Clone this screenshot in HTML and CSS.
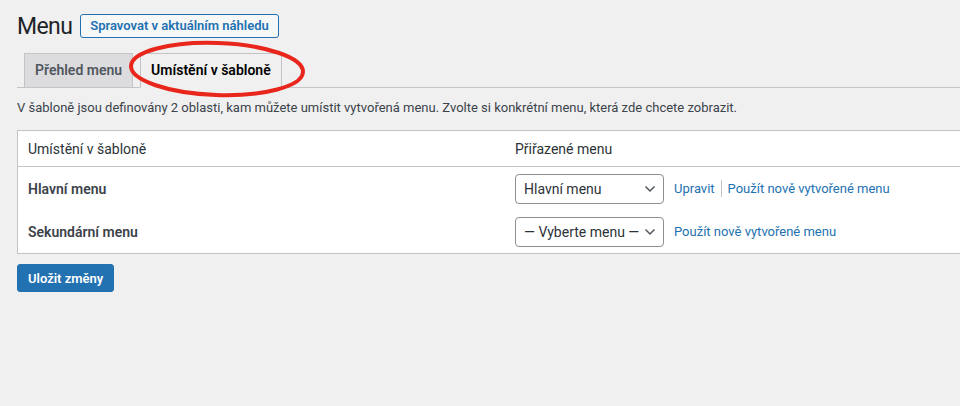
FILE: index.html
```html
<!DOCTYPE html>
<html lang="cs">
<head>
  <meta charset="UTF-8" />
  <meta name="viewport" content="width=device-width, initial-scale=1.0"/>
  <title>Menu</title>
  <link rel="stylesheet" href="styles.css">
</head>
<body>
  <div class="wrap">
    <div class="title-row">
      <h1>Menu</h1>
      <a href="#" class="title-action">Spravovat v aktuálním náhledu</a>
    </div>

    <div class="tabs">
      <a href="#" class="tab">Přehled menu</a>
      <a href="#" class="tab active">Umístění v šabloně</a>
      <svg class="mark" width="186" height="66" viewBox="0 0 186 66">
        <ellipse cx="93" cy="32" rx="86" ry="26" transform="rotate(2 93 32)" fill="none" stroke="#e8261c" stroke-width="4"/>
      </svg>
    </div>

    <p class="intro">V šabloně jsou definovány 2 oblasti, kam můžete umístit vytvořená menu. Zvolte si konkrétní menu, která zde chcete zobrazit.</p>

    <table class="locations">
      <thead>
        <tr>
          <th>Umístění v šabloně</th>
          <th>Přiřazené menu</th>
        </tr>
      </thead>
      <tbody>
        <tr>
          <td class="label">Hlavní menu</td>
          <td>
            <div class="assign">
              <span class="select">
                <select>
                  <option>Hlavní menu</option>
                </select>
                <svg class="chevron" width="12" height="8" viewBox="0 0 12 8"><path d="M1.5 1.5 6 6l4.5-4.5" fill="none" stroke="#50575e" stroke-width="1.5"/></svg>
              </span>
              <a href="#">Upravit</a>
              <span class="sep"></span>
              <a href="#">Použít nově vytvořené menu</a>
            </div>
          </td>
        </tr>
        <tr>
          <td class="label">Sekundární menu</td>
          <td>
            <div class="assign">
              <span class="select">
                <select>
                  <option>— Vyberte menu —</option>
                </select>
                <svg class="chevron" width="12" height="8" viewBox="0 0 12 8"><path d="M1.5 1.5 6 6l4.5-4.5" fill="none" stroke="#50575e" stroke-width="1.5"/></svg>
              </span>
              <a href="#">Použít nově vytvořené menu</a>
            </div>
          </td>
        </tr>
      </tbody>
    </table>

    <button class="primary">Uložit změny</button>
  </div>
</body>
</html>
```

FILE: styles.css
```css
body {
  margin: 0;
  font-family: Roboto, "Noto Sans", sans-serif;
  font-size: 13px;
  color: #3c434a;
  background-color: #f0f0f1;
  overflow: hidden;
}

.wrap {
  padding: 10px 0 0 17px;
}

.title-row {
  display: flex;
  align-items: center;
  height: 32px;
}

.title-row h1 {
  margin: 0 8px 0 0;
  font-size: 23px;
  font-weight: 400;
  letter-spacing: -0.6px;
  color: #1d2327;
}

.title-action {
  display: inline-block;
  padding: 0 9px;
  height: 22px;
  line-height: 22px;
  border: 1px solid #2271b1;
  border-radius: 3px;
  background-color: #f6f7f7;
  color: #2271b1;
  font-weight: 600;
  text-decoration: none;
}

.tabs {
  position: relative;
  display: flex;
  margin-top: 11px;
  border-bottom: 1px solid #c3c4c7;
}

.tab {
  margin: 0 0 -1px 7px;
  padding: 0 10px;
  height: 33px;
  line-height: 33px;
  border: 1px solid #c3c4c7;
  background-color: #dcdcde;
  color: #50575e;
  font-size: 14px;
  font-weight: 600;
  text-decoration: none;
}

.tab.active {
  background-color: #f0f0f1;
  border-bottom-color: #f0f0f1;
  color: #000;
}

.mark {
  position: absolute;
  left: 107px;
  top: -16px;
}

.intro {
  margin: 10px 0 12px;
  line-height: 20px;
}

.locations {
  width: 976px;
  border-collapse: collapse;
  background-color: #fff;
  border: 1px solid #c3c4c7;
}

.locations th {
  width: 50%;
  height: 35px;
  padding: 0 10px;
  text-align: left;
  font-size: 14px;
  font-weight: 400;
  color: #2c3338;
  border-bottom: 1px solid #c3c4c7;
}

.locations td {
  height: 43px;
  padding: 0 10px;
  font-size: 14px;
}

.locations td.label {
  font-weight: 600;
  color: #3c434a;
}

.assign {
  display: flex;
  align-items: center;
}

.select {
  position: relative;
  margin-right: 10px;
}

.select select {
  appearance: none;
  -webkit-appearance: none;
  width: 149px;
  height: 30px;
  padding: 0 24px 0 8px;
  border: 1px solid #8c8f94;
  border-radius: 4px;
  background-color: #fff;
  color: #2c3338;
  font-family: inherit;
  font-size: 14px;
}

.chevron {
  position: absolute;
  right: 8px;
  top: 11px;
  pointer-events: none;
}

.assign a {
  color: #2271b1;
  font-size: 13px;
  text-decoration: none;
}

.sep {
  display: inline-block;
  width: 1px;
  height: 17px;
  margin: 0 6px;
  background-color: #c3c4c7;
}

.primary {
  margin-top: 10px;
  padding: 0 10px;
  height: 28px;
  border: 1px solid #2271b1;
  border-radius: 3px;
  background-color: #2271b1;
  color: #fff;
  font-family: inherit;
  font-size: 13px;
  font-weight: 600;
}
```
